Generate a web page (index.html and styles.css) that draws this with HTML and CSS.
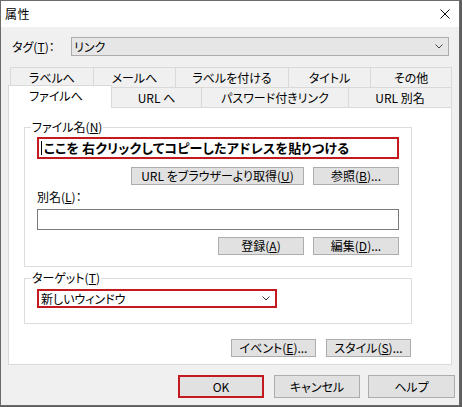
FILE: index.html
```html
<!DOCTYPE html>
<html lang="ja">
<head>
<meta charset="utf-8">
<title>属性</title>
<link rel="stylesheet" href="styles.css">
</head>
<body>
<div class="window">
  <div class="titlebar">
    <span class="title">属性</span>
    <svg class="close" width="10" height="10" viewBox="0 0 10 10"><path d="M0.5 0.5L9.5 9.5M9.5 0.5L0.5 9.5" stroke="#111" stroke-width="1" fill="none"/></svg>
  </div>
  <div class="tagrow">
    <span class="taglabel">タグ(<u>T</u>)：</span>
    <div class="select disabled">
      <span>リンク</span>
      <svg class="chev" width="8" height="5" viewBox="0 0 8 5"><path d="M0.5 0.5L4 4L7.5 0.5" stroke="#444" fill="none"/></svg>
    </div>
  </div>
  <div class="tabs">
    <div class="tabrow r1">
      <div class="tab t1">ラベルへ</div>
      <div class="tab t2">メールへ</div>
      <div class="tab t3">ラベルを付ける</div>
      <div class="tab t4">タイトル</div>
      <div class="tab t5">その他</div>
    </div>
    <div class="tabrow r2">
      <div class="tab sel">ファイルへ</div>
      <div class="tab t6">URL へ</div>
      <div class="tab t7">パスワード付きリンク</div>
      <div class="tab t8">URL 別名</div>
    </div>
  </div>
  <div class="panel">
    <fieldset class="group gfile">
      <legend>ファイル名(<u>N</u>)</legend>
      <div class="input red"><span class="caret"></span>ここを 右クリックしてコピーしたアドレスを貼りつける</div>
      <div class="btnrow b1">
        <div class="btn wurl">URL をブラウザーより取得(<u>U</u>)</div>
        <div class="btn w86">参照(<u>B</u>)...</div>
      </div>
      <div class="fieldlabel">別名(<u>L</u>)：</div>
      <div class="input plain"></div>
      <div class="btnrow b2">
        <div class="btn w86">登録(<u>A</u>)</div>
        <div class="btn w86">編集(<u>D</u>)...</div>
      </div>
    </fieldset>
    <fieldset class="group gtarget">
      <legend>ターゲット(<u>T</u>)</legend>
      <div class="select redsel">
        <span>新しいウィンドウ</span>
        <svg class="chev" width="8" height="5" viewBox="0 0 8 5"><path d="M0.5 0.5L4 4L7.5 0.5" stroke="#333" fill="none"/></svg>
      </div>
    </fieldset>
    <div class="btnrow b3">
      <div class="btn w85">イベント(<u>E</u>)...</div>
      <div class="btn w85">スタイル(<u>S</u>)...</div>
    </div>
  </div>
  <div class="footer">
    <div class="btn fbtn ok">OK</div>
    <div class="btn fbtn cancel">キャンセル</div>
    <div class="btn fbtn help">ヘルプ</div>
  </div>
</div>
</body>
</html>
```
FILE: styles.css
```css
* { box-sizing: border-box; }
body {
  margin: 0;
  background: #5e5e5e;
  font-family: "Noto Sans CJK JP", "Liberation Sans", sans-serif;
  font-size: 12px;
  line-height: 16px;
  font-feature-settings: "palt";
  color: #000;
}
u { text-underline-offset: 1px; }
.window {
  width: 460px;
  height: 406px;
  border: 1px solid #6b6b6b;
  background: #f0f0f0;
  display: flex;
  flex-direction: column;
}
.titlebar {
  height: 26px;
  background: #fff;
  display: flex;
  align-items: center;
  justify-content: space-between;
  padding: 0 9px 0 4px;
}
.title { font-size: 12px; letter-spacing: 0.5px; }
.close { display: block; margin-top: -1px; }

.tagrow {
  display: flex;
  align-items: center;
  margin-top: 10px;
  padding-left: 11px;
}
.taglabel { width: 59px; }
.select {
  height: 19px;
  display: flex;
  align-items: center;
  justify-content: space-between;
}
.select.disabled {
  width: 378px;
  background: #e6e6e6;
  border: 1px solid #adadad;
  padding: 0 5px 0 2px;
}
.chev { display: block; }

.tabs { margin-top: 11px; }
.tabrow { display: flex; align-items: flex-end; }
.tab {
  height: 21px;
  border: 1px solid #d9d9d9;
  background: #f0f0f0;
  display: flex;
  align-items: center;
  justify-content: center;
  margin-left: -1px;
  white-space: nowrap;
}
.r1 { padding-left: 10px; }
.t1 { width: 84px; }
.t2 { width: 83px; }
.t3 { width: 114px; }
.t4 { width: 83px; }
.t5 { width: 82px; }
.r2 { margin-top: -3px; padding-left: 8px; }
.tab.sel {
  width: 104px;
  height: 23px;
  background: #fff;
  border-bottom: none;
  position: relative;
  z-index: 1;
  align-items: flex-start;
  padding-top: 2px;
  padding-right: 8px;
}
.t6 { width: 91px; }
.t7 { width: 148px; }
.t8 { width: 104px; }

.panel {
  margin-left: 7px;
  margin-top: -1px;
  width: 444px;
  background: #fff;
  border: 1px solid #d9d9d9;
  padding: 11px 0 7px 15px;
}
.group {
  width: 388px;
  margin: 0;
  border: 1px solid #dcdcdc;
  padding: 2px 12px 11px 12px;
  min-width: 0;
}
.group legend {
  margin-left: -6px;
  padding: 0 1px;
  line-height: 16px;
}
.input {
  height: 22px;
  width: 362px;
}
.input.red {
  border: 2px solid #c3191f;
  font-weight: bold;
  font-size: 13px;
  display: flex;
  align-items: center;
  padding-left: 2px;
  letter-spacing: 0.2px;
  white-space: nowrap;
  overflow: hidden;
}
.caret {
  width: 1px;
  height: 14px;
  background: #000;
  margin-right: 2px;
}
.input.plain {
  height: 21px;
  border: 1px solid #7a7a7a;
}
.btnrow {
  display: flex;
  justify-content: flex-end;
  gap: 9px;
}
.b1 { margin-top: 8px; }
.b2 { margin-top: 7px; }
.btn {
  height: 18px;
  background: #e1e1e1;
  border: 1px solid #adadad;
  display: flex;
  align-items: center;
  justify-content: center;
  white-space: nowrap;
}
.wurl { width: 173px; }
.w86 { width: 86px; }
.w85 { width: 85px; }
.fieldlabel { margin-top: 4px; height: 16px; }
.plain { margin-top: 4px; }

.gtarget { margin-top: 3px; padding: 3px 12px 15px 12px; }
.select.redsel {
  width: 240px;
  border: 2px solid #c3191f;
  padding: 0 5px 0 2px;
}
.b3 { margin-top: 15px; width: 388px; padding-right: 1px; gap: 10px; }

.footer {
  display: flex;
  justify-content: flex-end;
  margin-top: 10px;
  padding-right: 4px;
}
.fbtn { height: 23px; }
.ok { width: 86px; border: 2px solid #c3191f; }
.cancel { width: 86px; margin-left: 10px; }
.help { width: 87px; margin-left: 8px; }
```
